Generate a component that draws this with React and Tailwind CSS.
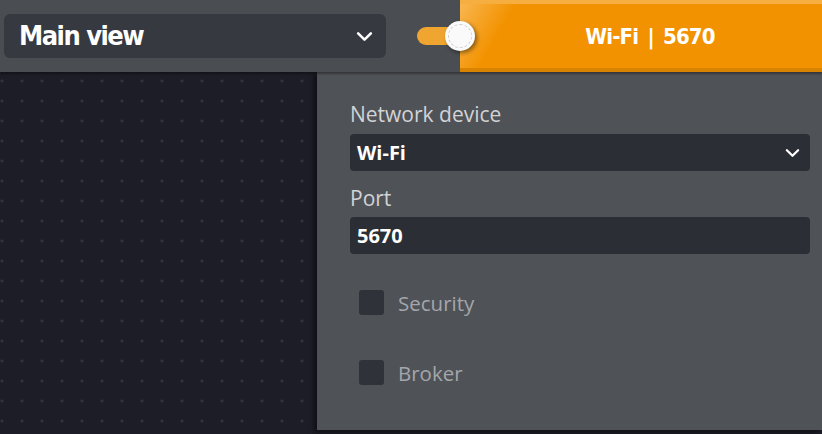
import React from 'react';

function Chevron({ className }) {
    return (
        <svg viewBox="0 0 16 10" className={className} fill="none" stroke="currentColor" strokeWidth="2.4" strokeLinecap="round" strokeLinejoin="round">
            <path d="M2 2l6 6 6-6" />
        </svg>
    );
}

function Checkbox({ label }) {
    return (
        <div className="flex items-center gap-[14px] pl-[9px]">
            <div className="w-[25px] h-[25px] rounded-[3px] bg-[#2f3239]"></div>
            <span className="text-[20.5px] leading-[24px] text-[#a3a6ab]">{label}</span>
        </div>
    );
}

export default function App() {
    return (
        <div className="relative w-[822px] h-[434px] overflow-hidden bg-[#1d1d27] font-['Open_Sans','Noto_Sans',sans-serif] flex flex-col">

            {/* Top bar */}
            <div className="relative z-20 h-[72px] flex items-center bg-[#4a4d52] shadow-[0_2px_2px_rgba(0,0,0,0.35)]">
                <div className="ml-[4px] w-[382px] h-[44px] rounded-[6px] bg-[#363940] flex items-center justify-between pl-[15px] pr-[13px]">
                    <span className="text-white text-[27px] leading-[36px] font-bold tracking-[-1.5px] font-['DejaVu_Sans_Condensed','DejaVu_Sans',sans-serif]">Main view</span>
                    <Chevron className="w-[17px] h-[11px] text-white" />
                </div>

                {/* Toggle */}
                <div className="relative ml-[31px] w-[43px] h-[18px] rounded-l-full bg-[#f0a530]">
                    <div className="absolute z-10 right-[-15px] top-[-6px] w-[30px] h-[30px] rounded-full bg-[#fafafa] shadow-[2px_2px_4px_rgba(0,0,0,0.45)] flex items-center justify-center">
                        <div className="w-[24px] h-[24px] rounded-full border border-dashed border-[#d0d0d0]"></div>
                    </div>
                </div>

                {/* Connection tab */}
                <div className="flex-1 h-full flex items-center justify-center pl-[18px] border-t-[4px] border-[#f6ae40] border-b-[4px] border-b-[#d88400] bg-[linear-gradient(120deg,#f8b650_0%,#f39200_14%,#f39200_100%)]">
                    <span className="text-white text-[22px] font-bold tracking-[-0.8px] [word-spacing:3px] font-['DejaVu_Sans_Condensed','DejaVu_Sans',sans-serif]">Wi-Fi | 5670</span>
                </div>
            </div>

            {/* Canvas */}
            <div className="flex-1 bg-[radial-gradient(circle,#32333e_1.3px,transparent_1.8px)] bg-[size:20px_20px] bg-[position:-8px_-1px]"></div>

            {/* Settings panel */}
            <div className="absolute z-10 left-[317px] top-[72px] w-[505px] h-[358px] bg-[#4f5257] shadow-[-3px_2px_5px_rgba(0,0,0,0.5)] pt-[30px] pl-[33px] pr-[12px] flex flex-col">
                <span className="text-[21px] leading-[24px] text-[#d2d3d5]">Network device</span>
                <div className="mt-[8px] h-[37px] rounded-[4px] bg-[#2c2e35] flex items-center justify-between pl-[7px] pr-[10px]">
                    <span className="text-white text-[20px] font-bold">Wi-Fi</span>
                    <Chevron className="w-[15px] h-[10px] text-white" />
                </div>
                <span className="mt-[15px] text-[21px] leading-[24px] text-[#d2d3d5]">Port</span>
                <div className="mt-[7px] h-[37px] rounded-[4px] bg-[#2c2e35] flex items-center pl-[7px]">
                    <span className="text-white text-[20px] font-bold">5670</span>
                </div>
                <div className="mt-[36px] flex flex-col gap-[45px]">
                    <Checkbox label="Security" />
                    <Checkbox label="Broker" />
                </div>
            </div>
        </div>
    );
}
